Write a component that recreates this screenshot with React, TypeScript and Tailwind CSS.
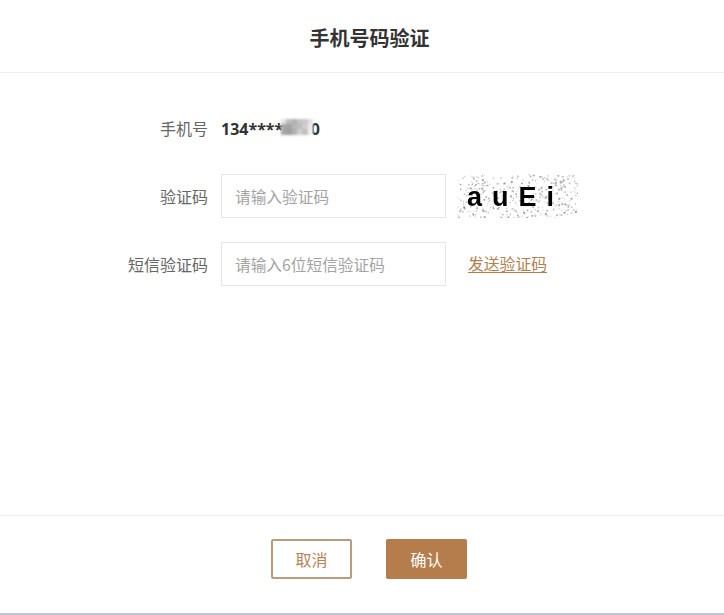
const FONT = "font-['Noto_Sans_CJK_SC','Noto_Sans',sans-serif]";

// noise dots behind the captcha letters, small seeded generator so the picture stays the same
let seed = 7;
const rnd = () => {
  seed = (seed * 16807) % 2147483647;
  return seed / 2147483647;
};
const DOTS = Array.from({ length: 520 }, () => {
  const cx = rnd() * 120;
  const cy = rnd() * 44;
  return { x: cx, y: cy, s: 0.8 + rnd() * 1.1, o: 0.2 + rnd() * 0.55 };
}).filter((d) => rnd() > 0.25);

const MOSAIC = ["#e4e4e4", "#bdbdbd", "#b0b0b0", "#c4c4c4", "#c9c9c9", "#e2e2e2", "#a8a8a8", "#a3a3a3", "#b8b8b8", "#bcbcbc", "#cfcfcf", "#ececec", "#a6a6a6", "#9f9f9f", "#b0b0b0", "#d0d0d0", "#c0c0c0", "#f0f0f0"];

function Captcha() {
  return (
    <div className="relative ml-[11px] h-[44px] w-[121px] shrink-0">
      <svg width="121" height="44" viewBox="0 0 120 44" className="absolute inset-0 blur-[0.5px]">
        {DOTS.map((d, i) => (
          <rect key={i} x={d.x} y={d.y} width={d.s} height={d.s} fill="#7f7f7f" opacity={d.o} />
        ))}
      </svg>
      <div className="absolute inset-0 flex items-center pt-[3px] pl-[10px] font-['Liberation_Sans',sans-serif] text-[27px] leading-none font-bold tracking-[10px] text-[#000] blur-[0.3px]">
        auEi
      </div>
    </div>
  );
}

function Row({ label, children, className }: { label: string; children: React.ReactNode; className?: string }) {
  return (
    <div className={`flex items-center ${className ?? ""}`}>
      <div className="w-[208px] shrink-0 text-right text-[16px] text-[#666]">{label}</div>
      <div className="ml-[13px] flex items-center">{children}</div>
    </div>
  );
}

export default function App() {
  return (
    <div className={`flex h-[615px] w-[724px] flex-col overflow-hidden bg-white ${FONT}`}>
      <div className="flex h-[73px] shrink-0 items-center justify-center border-b border-[#eeeeee] pt-[3px] pl-[15px] text-[20px] font-bold text-[#333]">
        手机号码验证
      </div>

      <div className="flex flex-1 flex-col pt-[38px]">
        <Row label="手机号" className="h-[34px]">
          <div className="relative text-[16px] font-bold text-[#333]">
            <span className="font-['Noto_Sans',sans-serif]">
              134****<span className="text-transparent">888</span>0
            </span>
            <div className="absolute top-[3px] left-[60px] grid h-[16px] w-[32px] grid-cols-6 grid-rows-3 blur-[0.8px]">
              {MOSAIC.map((c, i) => (
                <div key={i} style={{ backgroundColor: c }} />
              ))}
            </div>
          </div>
        </Row>

        <Row label="验证码" className="mt-[29px]">
          <input
            placeholder="请输入验证码"
            className="h-[44px] w-[225px] border border-[#e6e6e6] px-[13px] text-[15.7px] text-[#333] outline-none placeholder:text-[#a3a3a3]"
          />
          <Captcha />
        </Row>

        <Row label="短信验证码" className="mt-[24px]">
          <input
            placeholder="请输入6位短信验证码"
            className="h-[44px] w-[225px] border border-[#e6e6e6] px-[13px] text-[15.7px] text-[#333] outline-none placeholder:text-[#a3a3a3]"
          />
          <a className="ml-[22px] text-[15.8px] text-[#b0804f] underline underline-offset-2">发送验证码</a>
        </Row>
      </div>

      <div className="flex h-[98px] shrink-0 justify-center gap-[34px] border-t border-[#f0f0f0] pt-[23px] pl-[14px]">
        <button className="h-[40px] w-[81px] rounded-[2px] border-2 border-[#b99b7f] bg-white text-[16px] text-[#b5835a]">取消</button>
        <button className="h-[40px] w-[81px] rounded-[2px] bg-[#b57d4b] text-[16px] text-white">确认</button>
      </div>

      <div className="h-[2px] shrink-0 bg-[#c5c5d5]" />
    </div>
  );
}
